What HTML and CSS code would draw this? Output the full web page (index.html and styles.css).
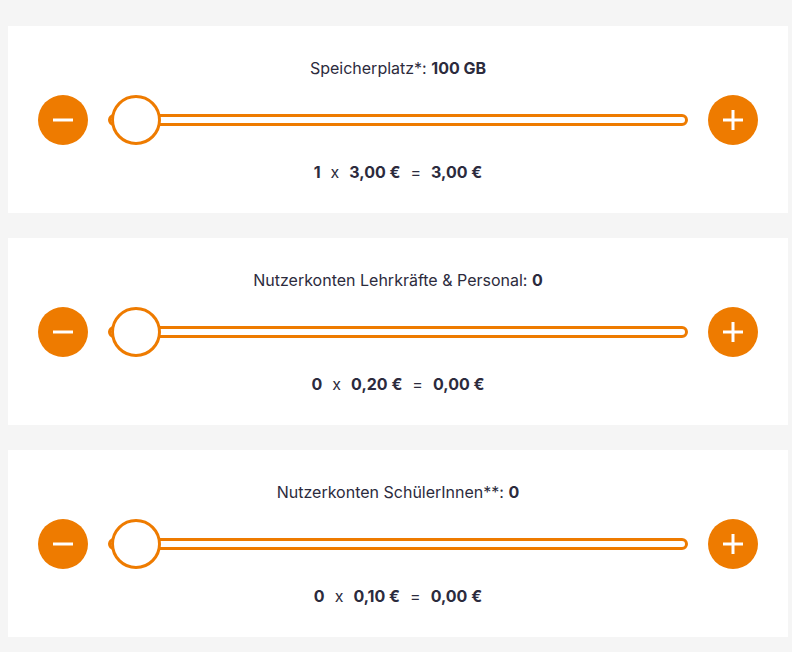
FILE: index.html
```html
<!DOCTYPE html>
<html lang="de">
<head>
<meta charset="utf-8">
<title>Konfigurator</title>
<link rel="stylesheet" href="styles.css">
</head>
<body>
<div class="page">
  <section class="card">
    <div class="title">Speicherplatz*: <b>100 GB</b></div>
    <div class="control">
      <button class="btn" aria-label="weniger"><svg width="20" height="20" viewBox="0 0 20 20"><line x1="0" y1="10" x2="20" y2="10" stroke="#fff" stroke-width="3"/></svg></button>
      <div class="slider"><div class="track"></div><div class="thumb"></div></div>
      <button class="btn" aria-label="mehr"><svg width="20" height="20" viewBox="0 0 20 20"><line x1="0" y1="10" x2="20" y2="10" stroke="#fff" stroke-width="3"/><line x1="10" y1="0" x2="10" y2="20" stroke="#fff" stroke-width="3"/></svg></button>
    </div>
    <div class="calc"><b>1</b><span>x</span><b>3,00 €</b><span>=</span><b>3,00 €</b></div>
  </section>
  <section class="card">
    <div class="title">Nutzerkonten Lehrkräfte &amp; Personal: <b>0</b></div>
    <div class="control">
      <button class="btn" aria-label="weniger"><svg width="20" height="20" viewBox="0 0 20 20"><line x1="0" y1="10" x2="20" y2="10" stroke="#fff" stroke-width="3"/></svg></button>
      <div class="slider"><div class="track"></div><div class="thumb"></div></div>
      <button class="btn" aria-label="mehr"><svg width="20" height="20" viewBox="0 0 20 20"><line x1="0" y1="10" x2="20" y2="10" stroke="#fff" stroke-width="3"/><line x1="10" y1="0" x2="10" y2="20" stroke="#fff" stroke-width="3"/></svg></button>
    </div>
    <div class="calc"><b>0</b><span>x</span><b>0,20 €</b><span>=</span><b>0,00 €</b></div>
  </section>
  <section class="card">
    <div class="title">Nutzerkonten SchülerInnen**: <b>0</b></div>
    <div class="control">
      <button class="btn" aria-label="weniger"><svg width="20" height="20" viewBox="0 0 20 20"><line x1="0" y1="10" x2="20" y2="10" stroke="#fff" stroke-width="3"/></svg></button>
      <div class="slider"><div class="track"></div><div class="thumb"></div></div>
      <button class="btn" aria-label="mehr"><svg width="20" height="20" viewBox="0 0 20 20"><line x1="0" y1="10" x2="20" y2="10" stroke="#fff" stroke-width="3"/><line x1="10" y1="0" x2="10" y2="20" stroke="#fff" stroke-width="3"/></svg></button>
    </div>
    <div class="calc"><b>0</b><span>x</span><b>0,10 €</b><span>=</span><b>0,00 €</b></div>
  </section>
</div>
</body>
</html>
```

FILE: styles.css
```css
html, body {
  margin: 0;
  padding: 0;
  background: #f5f5f5;
  font-family: Inter, "Noto Sans", sans-serif;
  color: #2c2b3d;
}
.page {
  padding: 26px 4px 0 8px;
  display: flex;
  flex-direction: column;
  gap: 25px;
}
.card {
  background: #fff;
  height: 187px;
  box-sizing: border-box;
  padding: 32px 30px 0;
  display: flex;
  flex-direction: column;
  gap: 17px;
}
.title {
  text-align: center;
  font-size: 16px;
  line-height: 20px;
}
.title b {
  font-weight: 700;
}
.control {
  display: flex;
  align-items: center;
  gap: 20px;
  height: 50px;
}
.btn {
  width: 50px;
  height: 50px;
  border-radius: 50%;
  border: none;
  background: #ee7b00;
  padding: 0;
  display: flex;
  align-items: center;
  justify-content: center;
  flex: none;
}
.slider {
  flex: 1;
  height: 50px;
  position: relative;
  display: flex;
  align-items: center;
}
.track {
  flex: 1;
  height: 12px;
  box-sizing: border-box;
  border: 3px solid #ee7b00;
  border-radius: 6px;
  background: #fff;
}
.thumb {
  position: absolute;
  left: 3px;
  top: 0;
  width: 50px;
  height: 50px;
  box-sizing: border-box;
  border: 3px solid #ee7b00;
  border-radius: 50%;
  background: #fff;
}
.calc {
  display: flex;
  justify-content: center;
  gap: 10px;
  font-size: 16px;
  line-height: 20px;
}
.calc b {
  font-weight: 700;
}
.calc span {
  font-weight: 400;
}
```
